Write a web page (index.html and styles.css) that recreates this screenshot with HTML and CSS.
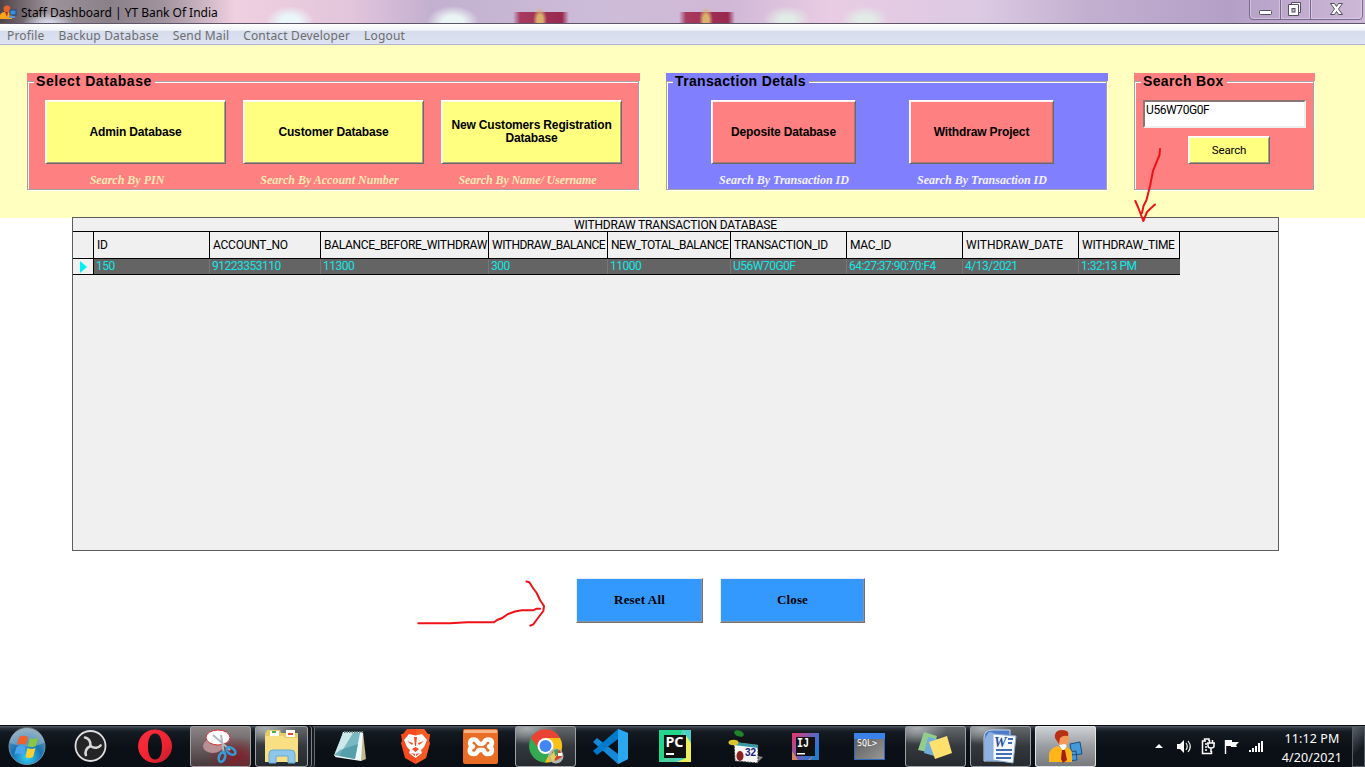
FILE: index.html
```
<!DOCTYPE html>
<html lang="en">
<head>
<meta charset="utf-8">
<title>Staff Dashboard | YT Bank Of India</title>
<link rel="stylesheet" href="styles.css">
</head>
<body>
<div class="screen">
  <header class="titlebar">
    <svg class="app-icon" viewBox="0 0 17 16"><circle cx="7" cy="4" r="3.4" fill="#e8632a"/><path d="M0 14V10Q1 7 5 7H8Q12 8 12 11V14Z" fill="#f7a51c"/><path d="M5 7L7 12L8 7Z" fill="#b03018"/><rect x="10" y="5" width="6" height="5" fill="#3c8fd8" stroke="#1b4a80"/><path d="M9 11h6v2H9z" fill="#5a9ad0"/></svg>
    <span class="title">Staff Dashboard | YT Bank Of India</span>
    <div class="window-buttons">
      <svg viewBox="0 0 116 20"><path d="M.5 0V16Q.5 19.5 4 19.5H110Q113.500 19.500 113.500 16V0M31.500 0V19M61.500 0V19" fill="none" stroke="#776b8d"/><path d="M1.500 0V15.500Q2 18.500 5 18.500H30.500V0M32.500 0V18.500H60.500V0M62.500 0V18.500H109Q112.500 18.500 112.500 15V0" fill="none" stroke="#e2d5eb" opacity=".6"/><rect x="10.500" y="10.500" width="12" height="4" rx="1" fill="#fff" stroke="#55505f"/><path d="M42.500 2.500h9v10h-9z" fill="#fff" stroke="#55505f"/><path d="M39.500 4.500h10v11h-10z" fill="#fff" stroke="#55505f"/><rect x="43" y="8.500" width="3" height="3.500" fill="#c9b9d8" stroke="#55505f"/><path d="M81.500 3.500h4l2 3 2-3h4l-4 5.500 4 5.500h-4l-2-3-2 3h-4l4-5.500z" fill="#fff" stroke="#55505f"/></svg>
    </div>
  </header>
  <nav class="menu"><span>Profile</span><span>Backup Database</span><span>Send Mail</span><span>Contact Developer</span><span>Logout</span></nav>

  <section class="toolbar">
    <div class="panel panel-select"><div class="frame"><div class="legend">Select Database</div>
      <div class="item"><button class="btn wide">Admin Database</button><div class="caption cap-pin">Search By PIN</div></div>
      <div class="item"><button class="btn wide">Customer Database</button><div class="caption cap-acc">Search By Account Number</div></div>
      <div class="item"><button class="btn wide">New Customers Registration<br>Database</button><div class="caption cap-name">Search By Name/ Username</div></div>
    </div></div>
    <div class="panel panel-trans"><div class="frame"><div class="legend">Transaction Detals</div>
      <div class="item"><button class="btn red">Deposite Database</button><div class="caption">Search By Transaction ID</div></div>
      <div class="item"><button class="btn red">Withdraw Project</button><div class="caption">Search By Transaction ID</div></div>
    </div></div>
    <div class="panel panel-search"><div class="frame"><div class="legend">Search Box</div>
      <div class="search-input">U56W70G0F</div>
      <button class="btn search-btn">Search</button>
    </div></div>
  </section>

  <main class="content">
    <div class="grid-box">
      <div class="grid-title"><span>WITHDRAW TRANSACTION DATABASE</span></div>
      <div class="grid-row head">
        <div></div><div>ID</div><div>ACCOUNT_NO</div><div class="long">BALANCE_BEFORE_WITHDRAW</div><div class="tight">WITHDRAW_BALANCE</div><div class="tight">NEW_TOTAL_BALANCE</div><div>TRANSACTION_ID</div><div>MAC_ID</div><div class="normal">WITHDRAW_DATE</div><div>WITHDRAW_TIME</div>
      </div>
      <div class="grid-row data">
        <div class="marker"><svg viewBox="0 0 7 12"><path d="M0 0L7 6L0 12Z" fill="#00f0f8"/></svg></div><div>150</div><div>91223353110</div><div>11300</div><div>300</div><div>11000</div><div>U56W70G0F</div><div>64:27:37:90:70:F4</div><div>4/13/2021</div><div>1:32:13 PM</div>
      </div>
    </div>
    <div class="actions"><button class="action reset">Reset All</button><button class="action close">Close</button></div>
  </main>

  <footer class="taskbar">
    <div class="start">
      <svg viewBox="0 0 58 41"><defs><radialGradient id="orb" cx=".5" cy=".8" r=".8"><stop offset="0" stop-color="#35d0f5"/><stop offset=".5" stop-color="#1774b4"/><stop offset="1" stop-color="#7798ac"/></radialGradient></defs><circle cx="27" cy="20.500" r="18" fill="url(#orb)" stroke="#6f93a8"/><path d="M10 17A17 16 0 0 1 44 17Q28 24 10 17Z" fill="#fff" opacity=".25"/><path d="M19 11Q23 8.500 28 11L26 19Q21 16.500 17 19Z" fill="#f0602a"/><path d="M30 12Q34 14 38 11.500L36 20Q32 22 28 20Z" fill="#8cc63f"/><path d="M16.500 21Q20.500 18.500 25.500 21L23.500 29Q18.500 26.500 14.500 28.500Z" fill="#4aa5ee"/><path d="M27.500 22Q31.500 24 35.500 22L33 31Q29 33 25.500 31Z" fill="#ffd02e"/></svg>
    </div>
    <div class="task"><svg viewBox="0 0 61 41"><circle cx="30.500" cy="20" r="15" fill="#242426" stroke="#dedede" stroke-width="1.800"/><g fill="none" stroke="#d7d7d7" stroke-width="2.600" stroke-linecap="round"><path d="M30.500 20C31 15 28 12 25 11.500"/><path d="M30.500 20C31 15 28 12 25 11.500" transform="rotate(120 30.500 20)"/><path d="M30.500 20C31 15 28 12 25 11.500" transform="rotate(240 30.500 20)"/></g></svg></div>
    <div class="task"><svg viewBox="0 0 61 41"><defs><linearGradient id="op" x2="1" y2="1"><stop offset="0" stop-color="#ff2c3e"/><stop offset=".6" stop-color="#ee2433"/><stop offset="1" stop-color="#c01a26"/></linearGradient></defs><path fill-rule="evenodd" fill="url(#op)" d="M30 3.500a17 16.700 0 1 0 .1 0ZM30 7.500c5 0 7 6 7 13s-2 13-7 13-7-6-7-13 2-13 7-13Z"/></svg></div>
    <div class="task open snip"><svg viewBox="0 0 61 41"><ellipse cx="23" cy="20" rx="10" ry="7" fill="#b88f92"/><ellipse cx="28" cy="11.500" rx="12" ry="7.500" fill="#fff" stroke="#d52b35"/><path d="M23 9L40 24M31 9L34 28" stroke="#aeb8be" stroke-width="2"/><g fill="none" stroke="#319cd8" stroke-width="2.600"><ellipse cx="41" cy="25" rx="5" ry="3" transform="rotate(35 41 25)"/><ellipse cx="32" cy="31" rx="3" ry="5" transform="rotate(20 32 31)"/></g></svg></div>
    <div class="task open explorer"><svg viewBox="0 0 61 41"><path d="M10 7L12 4H25L26 7H43V36H10Z" fill="#e6cb67"/><path d="M15 5h9v5h-9zM31 4h9v7h-9z" fill="#fff"/><path d="M17 5h4v2h-4z" fill="#48ad42"/><path d="M33 7h5v2h-5z" fill="#dc4b2e"/><path d="M10 10H28L30 12H43V36H10Z" fill="#f8df83"/><path d="M14 37V28Q14 24 18 24H36Q40 24 40 28V37H33V30H21V37Z" fill="#8dc7eb" stroke="#67a8d6"/></svg></div>
    <div class="task"><svg viewBox="0 0 61 41"><path d="M24 6H43L46 33L41 35Z" fill="#c6b88d"/><path d="M23 6H43L41 35L15 31Z" fill="#eff9f9"/><path d="M23 7H40L35 33L14 29Z" fill="#78b9c4"/><path d="M23 7H33L19 30H14Z" fill="#cce9e9"/><path d="M24 6H43" stroke="#657c7c" stroke-width="2" stroke-dasharray="1.500 1"/><path d="M20 24L38 18L35 33L14 29Z" fill="#42909e" opacity=".65"/></svg></div>
    <div class="task"><svg viewBox="0 0 61 41"><path d="M22 3H39L43 8H45L44 15L45 17L41 32L30.500 38L20 32L16 17L17 15L16 8H18Z" fill="#f74a20"/><path d="M31 3H39L43 8H45L44 15L45 17L41 32L31 38Z" fill="#fb6b25" opacity=".5"/><path fill="#fff" d="M24 8L30.500 9.500 37 8 42 14 39 21 36 24 37 27 30.500 32 24 27 25 24 22 21 19 14Z"/><path fill="#f74a20" d="M22 15L28 17 27 19ZM39 15L33 17 34 19ZM27 23L30.500 21 34 23 30.500 26ZM29 11L30 20H31L32 11ZM26 27L30 28 30 30ZM35 27L31 28 31 30Z"/></svg></div>
    <div class="task"><svg viewBox="0 0 61 41"><rect x="13" y="3" width="35" height="35" rx="2" fill="#e96d24"/><path d="M14 4H47V7H14Z" fill="#f7b488"/><path d="M24 13.500C19 13.500 19 20 23 20.500C19 22 18 28 24 28C28 28 27 24.500 29 24H33C35 24.500 33 28 38 28C43 28 43 22 39 20.500C43 19 43 13.500 38 13.500C34 13.500 35 18 31 18C27 18 28 13.500 24 13.500Z" fill="none" stroke="#fff" stroke-width="4.600" stroke-linejoin="round"/></svg></div>
    <div class="task open"><svg viewBox="0 0 61 41"><circle cx="30.500" cy="20" r="16.500" fill="#34a853"/><path d="M16 12A16.500 16.500 0 0 1 45 12H30.500L24 23Z" fill="#ea4335"/><path d="M45 12A16.500 16.500 0 0 1 30 36.500L38 20L30.500 12Z" fill="#fbc116"/><circle cx="30.500" cy="20" r="8" fill="#fff"/><circle cx="30.500" cy="20" r="6" fill="#4285f4"/><circle cx="41" cy="30" r="7.500" fill="#b3b6ad"/><path d="M37 26L45 24L47 31L40 35Z" fill="#cf4530"/><path d="M35 31L40 24L42 29L38 36Z" fill="#e3d15a"/><path d="M39 24L43 23V28L40 30Z" fill="#3b9f59"/><path d="M43 27h4v3h-4z" fill="#fff"/></svg></div>
    <div class="task"><svg viewBox="0 0 61 41"><path d="M38 3L48 7V33L38 38L13 16L17 12L38 28Z" fill="#1688d8"/><path d="M38 3L13 25L17 29L38 13Z" fill="#007acc"/><path d="M38 3L48 7V33L38 38Z" fill="#2aa8ef"/></svg></div>
    <div class="task"><svg viewBox="0 0 61 41"><rect x="14" y="4" width="32" height="32" fill="#24d58c"/><path d="M37 4H46V24L34 36H29L33 20Z" fill="#4bcfc8"/><path d="M37 4L41 9V32L32 36H46V17Z" fill="#edf05a"/><path d="M14 36L27 28L31 36Z" fill="#50d0a0"/><rect x="19" y="9" width="22" height="23" fill="#111"/><text x="20.500" y="20.500" textLength="18" lengthAdjust="spacingAndGlyphs" class="pc-text">PC</text><path d="M21 27h8v2h-8z" fill="#fff"/></svg></div>
    <div class="task"><svg viewBox="0 0 61 41"><path d="M36 35L48 30L53 31L47 37Z" fill="#888"/><path d="M24 16L48 19V37L25 35Z" fill="#f5f5f5" stroke="#333" stroke-dasharray="2 1"/><path d="M24 16L48 19V22L24 19Z" fill="#379aa4"/><path d="M24 14L19 11M29 13L30 9" stroke="#111" stroke-width="2"/><ellipse cx="29" cy="7.500" rx="5" ry="3" fill="#20842a" transform="rotate(20 29 7.500)"/><ellipse cx="23.500" cy="16.500" rx="5" ry="2.700" fill="#d8c52e"/><ellipse cx="30" cy="30" rx="3.500" ry="5" fill="#8e2020"/><text x="35" y="30" class="v32-text">32</text></svg></div>
    <div class="task"><svg viewBox="0 0 61 41"><defs><linearGradient id="ij" x2="1" y2=".6"><stop offset="0" stop-color="#ed3364"/><stop offset=".5" stop-color="#815aae"/><stop offset="1" stop-color="#177de2"/></linearGradient></defs><rect x="17" y="7" width="27" height="27" fill="url(#ij)"/><path d="M17 25L23 34H17ZM33 34L44 26V34Z" fill="#d88267"/><path d="M35 34L44 24V34Z" fill="#2479c9"/><rect x="21" y="11" width="19" height="19" fill="#111"/><text x="22" y="21" textLength="12" lengthAdjust="spacingAndGlyphs" class="ij-text">IJ</text><path d="M22 27h8v1.500h-8z" fill="#fff"/></svg></div>
    <div class="task"><svg viewBox="0 0 61 41"><defs><linearGradient id="sql" x2="1" y2="1"><stop offset="0" stop-color="#555"/><stop offset="1" stop-color="#999"/></linearGradient></defs><rect x="14.500" y="7.500" width="30" height="26" fill="url(#sql)" stroke="#3068be"/><path d="M14 7h31v6H14z" fill="#3982e8"/><text x="17" y="19.500" textLength="20" lengthAdjust="spacingAndGlyphs" class="sql-text">SQL&gt;</text></svg></div>
    <div class="task open"><svg viewBox="0 0 61 41"><path d="M19 6L32 10L27 27L13 24Z" fill="#92cd8c"/><path d="M23 11L36 14L33 31L19 27Z" fill="#6faedb"/><path d="M24 16L42 10L47 27L30 33Z" fill="#ffe06c"/></svg></div>
    <div class="task open"><svg viewBox="0 0 61 41"><path d="M14 12Q14 4 22 4H40V35H14Z" fill="#4d7cc7" stroke="#c1d7ed"/><path d="M19 6Q31 5 25 34H15V12Z" fill="#8db2e1"/><path d="M23 8L46 10L43 37L23 34Z" fill="#f5f9ff" stroke="#8dadd8"/><text x="24" y="21" class="word-text">W</text><path d="M38 13h5M38 17h4M26 24h16M26 28h16M26 32h15" stroke="#416fb6" stroke-width="2"/></svg></div>
    <div class="task active"><svg viewBox="0 0 61 41"><path d="M35 18L45 16L47 28L37 29ZM31 26L41 25L42 34L32 35Z" fill="#439ad9" stroke="#174f83"/><ellipse cx="28" cy="13" rx="6" ry="8" fill="#f29b58"/><path d="M20 12Q19 4 27 4Q35 4 33 10Q28 9 25 12L24 18Z" fill="#b92f16"/><path d="M14 36V28Q15 22 23 20L28 24L32 21Q38 24 37 30V36Z" fill="#ffb519"/><path d="M24 19L28 25L32 20L30 18Z" fill="#fff"/><path d="M27 24H30L32 34L28 37L26 33Z" fill="#a21d12"/></svg></div>
    <div class="tray">
      <svg viewBox="0 0 130 41"><path d="M9 22L13 18L17 22Z" fill="#fff"/><g fill="#fff"><path d="M31 18h3l4-4v13l-4-4h-3z"/><path d="M40 17q2.500 3.500 0 7M42 15q4.500 5.500 0 11" fill="none" stroke="#fff" stroke-width="1.100"/></g><g fill="none" stroke="#fff" stroke-width="1.500"><path d="M60 15H56.500V27.500H65.500V25M58.500 15V13H63V15M59 18H61M59 21H61M59 24H61"/><path d="M61 17H69M62 17V20Q62 22 65 22Q68 22 68 20V17M63.500 14V17M66.500 14V17M65 22V26"/></g><path d="M79.500 14V28" stroke="#fff" stroke-width="1.400"/><path d="M80 14H86V16H93L90 19L91 21H85V20H80Z" fill="#fff"/><path d="M103 24h2v2h-2zM106 22h2v4h-2zM109 20h2v6h-2zM112 17h2v9h-2zM115 15h2v11h-2z" fill="#fff"/></svg>
    </div>
    <div class="clock"><div class="time">11:12 PM</div><div class="date">4/20/2021</div></div>
    <div class="show-desktop"></div>
  </footer>

  <svg class="annotations" viewBox="0 0 1365 767"><g fill="none" stroke="#f01216" stroke-width="2" stroke-linecap="round" stroke-linejoin="round"><path d="M1160 149L1159.500 155L1157 161L1153 171L1150 186L1146.500 200L1143.500 206L1142 213M1135.300 201L1138 207L1143.300 221L1147 212L1150 209L1155 204.500"/><path d="M418.300 623.300H450L467 622.300H494L497 620L501.700 618.300L508 614L515 611.500L521.700 610.300H533L536.700 608.700H540M526.500 581.500L529.300 582.300L533 588L536.700 593L540 600L544 606L543.300 611L538 618L533.300 624.300L530.300 625.700"/></g></svg>
</div>
</body>
</html>
```
FILE: styles.css
```
* { box-sizing: border-box; }
body { margin: 0; background: #fff; font-family: "Liberation Sans", sans-serif; }
button { font: inherit; padding: 0; border-radius: 0; color: #000; }
.screen { position: relative; width: 1365px; height: 767px; overflow: hidden; display: flex; flex-direction: column; }

.titlebar {
  height: 24px; flex: none; display: flex; align-items: flex-start;
  border-bottom: 1px solid #5d5568;
  background:
    radial-gradient(ellipse 7px 13px at 540px 20px, #d9b06c 40%, transparent 100%),
    radial-gradient(ellipse 7px 13px at 706px 20px, #d9b06c 40%, transparent 100%),
    linear-gradient(90deg, transparent 513px, #a83a60 520px, #98284d 562px, transparent 569px, transparent 679px, #a83a60 686px, #98284d 728px, transparent 735px) 0 12px / 100% 12px no-repeat,
    radial-gradient(ellipse 24px 16px at 290px 22px, #e9f7fa 40%, transparent 100%),
    radial-gradient(ellipse 26px 16px at 453px 22px, #eaf4f4 40%, transparent 100%),
    radial-gradient(ellipse 24px 14px at 787px 20px, #e2ece6 30%, transparent 100%),
    radial-gradient(ellipse 24px 14px at 865px 20px, #e2ece6 30%, transparent 100%),
    radial-gradient(ellipse 26px 12px at 48px 24px, #d5d7e8 20%, transparent 100%),
    linear-gradient(90deg, #4e4348 0, #9d949b 50px, #8a8088 110px, #a2949f 165px, #efd0e0 235px, #e3c5dc 350px, #c3b0d0 430px, #cdbcd9 600px, #d0b8d6 730px, #e9cce4 830px, #dcc9e2 980px, #c2afd0 1090px, #b49fc6 1230px, #cdb8d8 1365px);
}
.app-icon { width: 17px; height: 16px; margin-top: 5px; }
.title { margin: 4px 0 0 4px; font: 12px/17px "Noto Sans", sans-serif; letter-spacing: -.02px; white-space: nowrap; }
.window-buttons { margin-left: auto; width: 116px; height: 20px; }
.window-buttons svg, .app-icon { display: block; }

.menu {
  height: 21px; flex: none; display: flex; gap: 14px; padding: 3px 0 0 7px;
  background: linear-gradient(#fff 0, #f5f7fb 5px, #eaeef5 7px, #d5dcec 7px, #dde3f2 20px, #b3b6cf 20px);
  color: #6d6d6d; font: 12px/17px "Noto Sans", sans-serif; letter-spacing: .16px; white-space: nowrap;
}
.toolbar { height: 173px; flex: none; display: flex; align-items: flex-start; padding: 28px 0 0 27px; background: #ffffc0; }
.panel { height: 117px; padding-top: 8px; margin-right: 26px; background: linear-gradient(var(--c) 8px, transparent 8px); }
.panel-select { --c: #ff8080; width: 613px; }
.panel-trans { --c: #8080ff; width: 442px; }
.panel-search { --c: #ff8080; width: 181px; }
.frame {
  position: relative; height: 109px; margin-right: 1px; background: var(--c); display: flex;
  border: 1px solid #a9a0a0; box-shadow: inset 1px 1px #fff, 1px 1px #fff; padding: 18px 0 0 17px; gap: 17px;
}
.panel-trans .frame { padding-left: 44px; gap: 53px; }
.panel-search .frame { flex-direction: column; gap: 8px; padding-left: 8px; }
.legend { position: absolute; left: 6px; top: -9px; padding: 0 3px 0 2px; height: 17px; background: var(--c); font-size: 14px; line-height: 17px; font-weight: bold; letter-spacing: .35px; white-space: nowrap; }
.panel-select .legend { letter-spacing: .57px; }
.item { display: flex; flex-direction: column; align-items: center; }
.btn {
  height: 64px; background: #ffff80; font-size: 12px; line-height: 13px; font-weight: bold; letter-spacing: -.15px; white-space: nowrap;
  border: 1px solid; border-color: #fff #6a6a6a #6a6a6a #fff; box-shadow: inset 1px 1px #fff9e8, inset -1px -1px #a8a088;
}
.btn.wide { width: 181px; }
.btn.red { width: 145px; background: #ff8080; box-shadow: inset 1px 1px #fff0f0, inset -1px -1px #a87878; }
.caption { margin-top: 9px; font: italic bold 12px/14px "Liberation Serif", serif; color: #f4f0ff; white-space: nowrap; }
.panel-select .caption { color: #ffe9b4; }
.panel-trans .caption { margin-left: 1px; }
.cap-pin { margin-right: 17px; }
.cap-acc { margin-right: 8px; }
.panel-select .cap-name { margin-right: 8px; letter-spacing: -.1px; }
.search-input { width: 163px; height: 28px; background: #fff; border: 2px solid; border-color: #8a7575 #eee #eee #8a7575; padding-left: 1px; font: 12px/17px Roboto, sans-serif; letter-spacing: -.4px; }
.search-btn { width: 82px; height: 28px; margin-left: 45px; font-weight: normal; font-size: 11.5px; font-family: Roboto, sans-serif; }

.content { flex: 1; padding-left: 72px; margin-top: -1px; }
.grid-box { width: 1207px; height: 334px; border: 1px solid #5c5c5c; background: #f0f0f0; font-family: Roboto, sans-serif; font-size: 12px; white-space: nowrap; }
.grid-title { height: 14px; border-bottom: 1px solid #000; text-align: center; line-height: 15px; letter-spacing: -.17px; }
.grid-row { display: grid; width: 1107px; grid-template-columns: 21px 116px 111px 168px 119px 123px 116px 116px 116px 101px; border-bottom: 1px solid #000; }
.grid-row > div { overflow: hidden; padding-left: 3px; }
.head { height: 27px; line-height: 26px; letter-spacing: -.25px; }
.head > div { border-right: 1px solid #000; }
.head > .long { letter-spacing: -.3px; }
.head > .tight { letter-spacing: -.5px; }
.head > .normal { letter-spacing: 0; }
.data { height: 16px; line-height: 14px; color: #12e6e6; background: #646464; letter-spacing: -.5px; }
.data > div { padding-left: 2px; border-right: 1px solid #777; }
.data > div:last-child { border-right: 0; }
.data > .marker { background: #f0f0f0; border-right: 1px solid #000; padding: 2px 0 0 7px; }
.marker svg { display: block; width: 7px; height: 12px; }
.actions { display: flex; gap: 17px; padding: 27px 0 0 504px; }
.action { height: 45px; padding-bottom: 2px; background: #3399ff; border: 1px solid; border-color: #e8eef6 #77706c #77706c #e8eef6; box-shadow: inset -1px -1px #8594ad; font: bold 13px "Liberation Serif", serif; }
.reset { width: 127px; letter-spacing: .15px; }
.close { width: 145px; letter-spacing: .15px; }

.taskbar { height: 42px; flex: none; display: flex; border-top: 1px solid #06080b; background: linear-gradient(#59626d 0, #2b333c 2px, #141a21 6px, #0b1016 22px, #0a0f15 100%); }
.taskbar svg { display: block; height: 41px; width: 100%; }
.start { width: 60px; flex: none; padding-right: 2px; }
.task { width: 61px; flex: none; margin-right: 4px; height: 41px; position: relative; }
.open { border-radius: 3px; background: radial-gradient(ellipse 30px 16px at 20% 5%, #aaafb3, transparent), linear-gradient(#656a6f, #34383c 50%, #26292d); box-shadow: inset 0 0 0 1px #9ca1a6; }
.snip { background: radial-gradient(ellipse 30px 20px at 75% 75%, #7f2027, transparent), linear-gradient(#8d8788, #45373a); }
.explorer { width: 53px; margin-right: 12px; box-shadow: inset 0 0 0 1px #9ca1a6, 3px 0 #15191e, 4px 0 #7c8186, 6px 0 #15191e, 7px 0 #656a70; }
.explorer svg { width: 61px; }
.active { border-radius: 3px; background: linear-gradient(#d0d4d7, #999da1 50%, #75797d); box-shadow: inset 0 0 0 1px #e0e3e5; }
.pc-text { font: bold 14px "Noto Sans", sans-serif; fill: #fff; }
.ij-text { font: bold 13px "Liberation Mono", monospace; fill: #fff; }
.v32-text { font: bold 10px "Liberation Sans", sans-serif; fill: #181880; }
.sql-text { font: 8.5px "DejaVu Sans Mono", monospace; fill: #fff; }
.word-text { font: italic bold 14px "Liberation Serif", serif; fill: #284f91; }
.tray { width: 130px; margin-left: 46px; flex: none; }
.clock { width: 76px; flex: none; margin-left: -2px; text-align: center; color: #fff; font: 12.5px/19px "Noto Sans", sans-serif; letter-spacing: .1px; padding-top: 3px; white-space: nowrap; }
.show-desktop { margin-left: auto; width: 13px; border: 1px solid #555d64; background: linear-gradient(135deg, #59616a, #151a20 60%); }

.annotations { position: absolute; inset: 0; width: 1365px; height: 767px; pointer-events: none; }
```
